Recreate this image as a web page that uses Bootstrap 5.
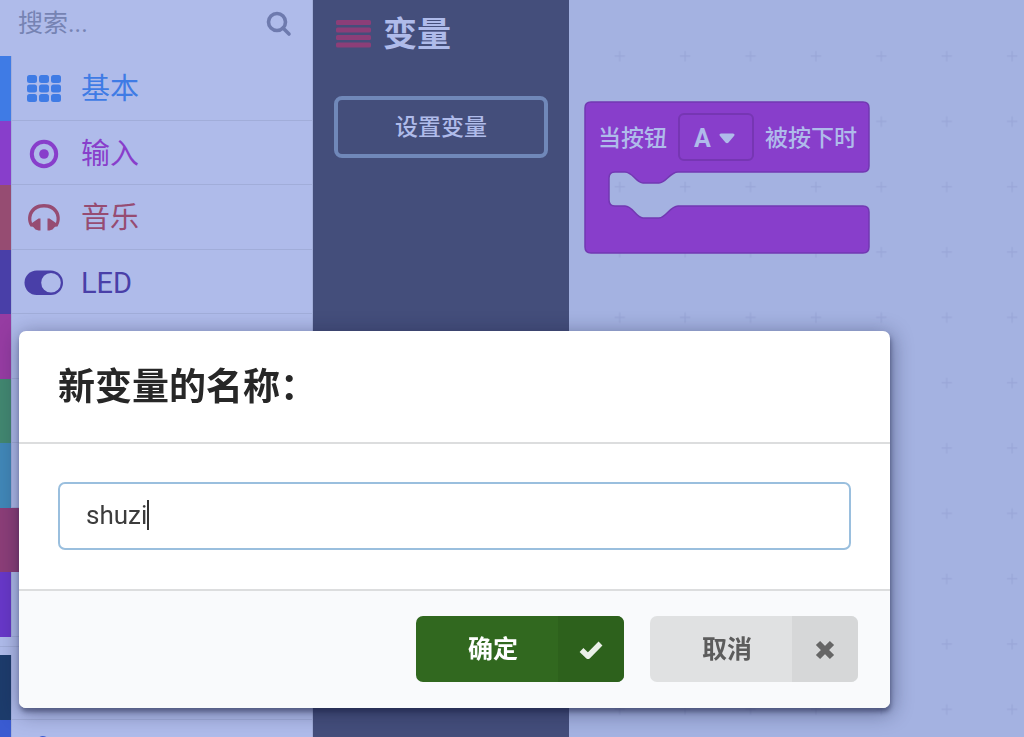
<!DOCTYPE html>
<html lang="zh-CN">
<head>
<meta charset="utf-8">
<meta name="viewport" content="width=device-width, initial-scale=1">
<title>变量</title>
<link href="https://cdn.jsdelivr.net/npm/bootstrap@5.3.0/dist/css/bootstrap.min.css" rel="stylesheet">
<style>
  body { font-family: Roboto, "Noto Sans CJK SC", sans-serif; background: #a4b2e1; }
  .toolbox { width: 313px; background: #afbbea; border-right: 1px solid #a1add9; }
  .search-row { height: 56px; padding: 0 20px 8px 18px; }
  .search-row input { font-size: 25px; color: #6e7bab; line-height: 32px; }
  .search-row input::placeholder { color: #7683b3; opacity: 1; }
  .search-row button { color: #6e7aae; }
  .cat { height: 65px; color: var(--c); font-size: 29px; line-height: 40px; border-left: 11px solid var(--c); }
  .cat:nth-child(even) { height: 64px; }
  .cat a { color: inherit; gap: 18px; padding: 2px 0 0 12px; border-bottom: 1px solid #a1add9; border-left: 1px solid #a2aedc; }
  .cat svg { width: 39px; height: 40px; flex: none; }
  .cat.active { background: var(--c); }
  .cat.active a { color: #afbbea; border-color: var(--c); }
  .cat-group + .cat-group { border-top: 1px solid #a1add9; margin-top: 9px; padding-top: 8px; }
  .flyout { width: 256px; background: #444e7b; padding: 11px 21px; color: #afbbea; }
  .flyout h2 { font-size: 34px; line-height: 46px; font-weight: 700; margin: 0 0 39px; gap: 12px; }
  .btn-var { border: 4px solid #7088b9; border-radius: 8px; height: 62px; font-size: 23px; font-weight: 500; color: #afbbea; padding: 2px 0 0; }
  .block { width: 286px; height: 153px; margin: 101px 0 0 15px; }
  .block-row { height: 72px; padding: 0 13px; gap: 11px; font-size: 23px; font-weight: 500; color: #afbbea; }
  .block-row label, .block-row span { white-space: nowrap; line-height: 32px; padding-top: 3px; }
  .block-row label { padding-left: 1px; }
  .block-select { width: 76px; height: 48px; }
  .block-select select { appearance: none; background: none; border: 2px solid #7636b3; border-radius: 6px; color: #afbbea; font-size: 25px; font-weight: 700; padding: 3px 0 0 14px; }
  .block-select svg { right: 19px; top: 20px; }
  .overlay { padding: 331px 19px 0; }
  .prompt { max-width: 871px; margin: 0; }
  .prompt .modal-content { border: 0; border-radius: 7px; box-shadow: 1px 4px 4px rgba(20,25,60,.4), 1px 4px 20px 2px rgba(20,25,60,.4); }
  .prompt .modal-header { height: 113px; padding: 2px 39px 0; border-bottom: 2px solid #dcddde; border-radius: 0; }
  .prompt h1 { font-size: 37px; line-height: 50px; font-weight: 700; color: #272727; }
  .prompt .modal-body { padding: 38px 39px 39px; }
  .prompt .form-control { height: 68px; border: 2px solid #9abfde; border-radius: 7px; font-size: 26px; color: #3c3c3c; padding: 0 26px 2px; }
  .caret { left: 89px; top: 18px; width: 2px; height: 30px; background: #333; }
  .prompt .modal-footer { height: 119px; padding: 0 32px 2px 0; gap: 26px; background: #f9fafc; border-top: 2px solid #dcddde; border-radius: 0 0 7px 7px; }
  .btn-act { width: 208px; height: 66px; border: 0; border-radius: 7px; font-size: 25px; font-weight: 700; padding: 0; margin: 0; overflow: hidden; }
  .btn-act span { padding: 2px 0 0 12px; }
  .btn-act i { width: 66px; padding-top: 2px; }
  .btn-ok, .btn-ok:hover { background: #31681f; color: #fff; }
  .btn-ok i { background: #2d611c; }
  .btn-no, .btn-no:hover { background: #e0e1e2; color: #5c5c5c; }
  .btn-no i { background: #d6d7d8; }
</style>
</head>
<body class="vh-100 overflow-hidden">
<div class="d-flex h-100 overflow-hidden">
  <nav class="toolbox flex-shrink-0 h-100 overflow-hidden">
    <form class="search-row d-flex align-items-center">
      <input type="text" class="form-control border-0 bg-transparent p-0" placeholder="搜索..." aria-label="搜索">
      <button type="button" class="btn p-0 border-0 flex-shrink-0 lh-1" aria-label="搜索">
        <svg width="26" height="26" viewBox="0 0 26 26" fill="none" stroke="currentColor" stroke-width="3.600"><circle cx="11" cy="11" r="8.500"/><path d="M17 17l6 6" stroke-linecap="round"/></svg>
      </button>
    </form>
    <div class="cat-group">
      <div class="cat" style="--c:#3f7be5"><a href="#" class="d-flex align-items-center h-100 text-decoration-none">
        <svg viewBox="0 0 39 40" fill="currentColor"><g id="r"><rect x="3" y="6" width="10" height="8" rx="2.500"/><rect x="15" y="6" width="10" height="8" rx="2.500"/><rect x="27" y="6" width="10" height="8" rx="2.500"/></g><use href="#r" y="9.500"/><use href="#r" y="19"/></svg>基本</a></div>
      <div class="cat" style="--c:#883ecb"><a href="#" class="d-flex align-items-center h-100 text-decoration-none">
        <svg viewBox="0 0 39 40"><circle cx="20" cy="20" r="12.200" fill="none" stroke="currentColor" stroke-width="4"/><circle cx="20" cy="20" r="4.800" fill="currentColor"/></svg>输入</a></div>
      <div class="cat" style="--c:#964c72"><a href="#" class="d-flex align-items-center h-100 text-decoration-none">
        <svg viewBox="0 0 39 40" fill="currentColor"><path d="M6.500 28.500C1 20 5 6 20 6S39 20 33.500 28.500L31 28.800 28.500 31.500 25.500 32.500H23.500V20.500H25.500L32 25C34.500 17 29.500 9.500 20 9.500S5.500 17 8 25L14.500 20.500H16.500V32.500H14.500L11.500 31.500 9 28.800Z"/></svg>音乐</a></div>
      <div class="cat" style="--c:#493fa8"><a href="#" class="d-flex align-items-center h-100 text-decoration-none">
        <svg viewBox="0 0 39 40"><rect x=".500" y="7.500" width="38.500" height="24.500" rx="12.250" fill="currentColor"/><circle cx="27" cy="19.700" r="9.800" fill="#afbbea"/></svg>LED</a></div>
      <div class="cat" style="--c:#963ca2"><a href="#" class="d-block h-100" aria-label="无线"></a></div>
      <div class="cat" style="--c:#428770"><a href="#" class="d-block h-100" aria-label="循环"></a></div>
      <div class="cat" style="--c:#4187b7"><a href="#" class="d-block h-100" aria-label="逻辑"></a></div>
      <div class="cat active" style="--c:#8c3e78"><a href="#" class="d-block h-100" aria-label="变量"></a></div>
      <div class="cat" style="--c:#6838c8"><a href="#" class="d-block h-100" aria-label="数学"></a></div>
    </div>
    <div class="cat-group">
      <div class="cat" style="--c:#1d3c6c"><a href="#" class="d-block h-100" aria-label="高级"></a></div>
      <div class="cat" style="--c:#3a5bd1"><a href="#" class="d-flex align-items-center h-100" aria-label="函数">
        <svg viewBox="0 0 39 40" fill="none" stroke="currentColor" stroke-width="4"><path d="M22 6c-6-3-8 2-9 8l-2 12c-1 6-3 9-8 7M7 17h13"/></svg></a></div>
    </div>
  </nav>
  <aside class="flyout flex-shrink-0">
    <h2 class="d-flex align-items-center">
      <svg width="37" height="30" viewBox="0 0 37 30" fill="#8c3e78"><rect x="2" y="1" width="35" height="5" rx="1.500"/><rect x="2" y="8.500" width="35" height="5" rx="1.500"/><rect x="2" y="16" width="35" height="5" rx="1.500"/><rect x="2" y="23.500" width="35" height="5" rx="1.500"/></svg>变量</h2>
    <button type="button" class="btn btn-var w-100">设置变量</button>
  </aside>
  <main class="flex-grow-1 position-relative">
    <svg class="position-absolute top-0 start-0 w-100 h-100" aria-hidden="true">
      <defs><pattern id="plus" x="18" y="23.500" width="65.400" height="65.330" patternUnits="userSpaceOnUse"><path d="M27.500 32.500h10.500M32.700 27.500v10.500" stroke="#99a6d7" stroke-width="1.200"/></pattern></defs>
      <rect width="100%" height="100%" fill="url(#plus)"/>
    </svg>
    <div class="block position-relative">
      <svg class="position-absolute top-0 start-0" width="286" height="153" viewBox="0 0 286 153" aria-hidden="true"><path fill="#883ecb" stroke="#7238b2" stroke-width="1.500" d="M7 1H279Q285 1 285 7V65Q285 71 279 71H94C86 71 82 82 75 82H59C52 82 49 71 41 71H31Q25 71 25 77V99Q25 105 31 105H41C49 105 52 117 59 117H75C82 117 86 105 94 105H279Q285 105 285 111V146Q285 152 279 152H7Q1 152 1 146V7Q1 1 7 1Z"/></svg>
      <div class="block-row position-relative d-flex align-items-center">
        <label for="which">当按钮</label>
        <div class="block-select position-relative flex-shrink-0">
          <select id="which" class="w-100 h-100"><option>A</option><option>B</option></select>
          <svg class="position-absolute pe-none" width="16" height="11" viewBox="0 0 16 11" fill="#afbbea"><path d="M2 .500H14Q16.500 1 15 3L9.500 9.500Q8 11 6.500 9.500L1 3Q-.500 1 2 .500Z"/></svg>
        </div>
        <span>被按下时</span>
      </div>
    </div>
  </main>
</div>
<div class="modal d-block overlay overflow-hidden" role="dialog" aria-labelledby="ttl">
  <div class="modal-dialog prompt">
    <form class="modal-content">
      <div class="modal-header"><h1 class="modal-title" id="ttl">新变量的名称：</h1></div>
      <div class="modal-body">
        <div class="position-relative">
          <input type="text" class="form-control" value="shuzi" aria-labelledby="ttl">
          <span class="caret position-absolute"></span>
        </div>
      </div>
      <div class="modal-footer">
        <button type="button" class="btn btn-act btn-ok d-flex align-items-stretch">
          <span class="flex-grow-1 align-self-center">确定</span>
          <i class="d-flex align-items-center justify-content-center"><svg width="24" height="20" viewBox="0 0 24 20" fill="none" stroke="#eaf0e8" stroke-width="5.500" stroke-linejoin="round"><path d="M2.500 10L9 16.200 21.500 3.500"/></svg></i>
        </button>
        <button type="button" class="btn btn-act btn-no d-flex align-items-stretch">
          <span class="flex-grow-1 align-self-center">取消</span>
          <i class="d-flex align-items-center justify-content-center"><svg width="20" height="20" viewBox="0 0 20 20" stroke="#666" stroke-width="6"><path d="M3 3L17 17M17 3L3 17"/></svg></i>
        </button>
      </div>
    </form>
  </div>
</div>
<script src="https://cdn.jsdelivr.net/npm/bootstrap@5.3.0/dist/js/bootstrap.bundle.min.js"></script>
</body>
</html>
